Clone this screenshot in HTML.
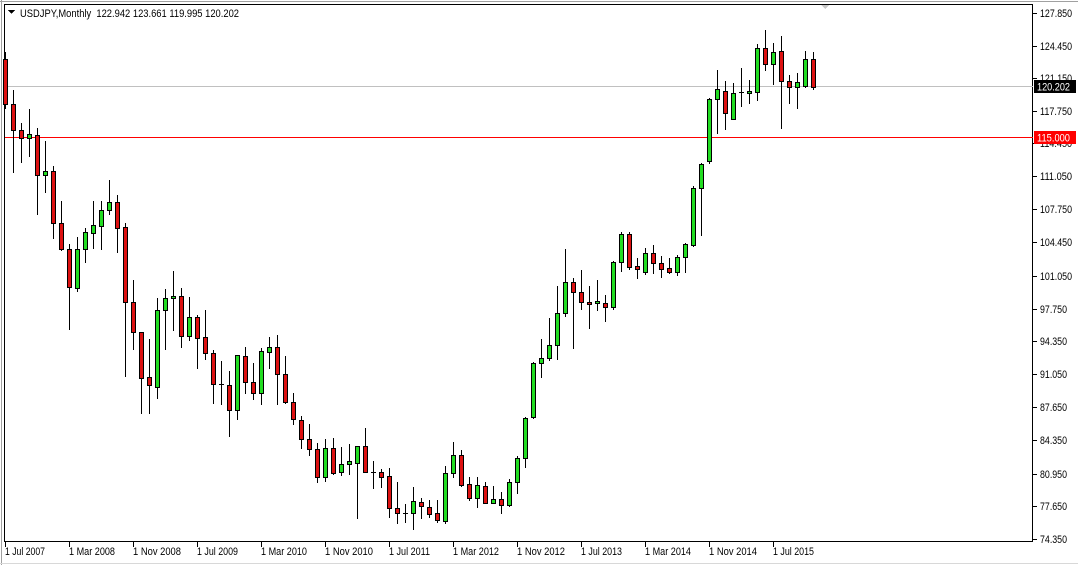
<!DOCTYPE html>
<html><head><meta charset="utf-8">
<style>
html,body{margin:0;padding:0;background:#fff;}
body{width:1078px;height:565px;overflow:hidden;position:relative;}
svg text{font-family:"Liberation Sans",Arial,sans-serif;font-size:11px;fill:#000;}
</style></head><body>
<svg id="s" width="1078" height="565" xmlns="http://www.w3.org/2000/svg" shape-rendering="crispEdges">
<rect x="0" y="0" width="1078" height="565" fill="#fff"/>
<line x1="0" y1="1.5" x2="1078" y2="1.5" stroke="#a0a0a0"/>
<line x1="1.5" y1="0" x2="1.5" y2="565" stroke="#a0a0a0"/>
<line x1="0" y1="563.5" x2="1078" y2="563.5" stroke="#d8d8d8"/>
<rect x="4.5" y="4.5" width="1028" height="537" fill="none" stroke="#000"/>
<polygon points="821,5 829,5 825,9" fill="#c8c8c8"/>
<line x1="5" y1="86.5" x2="1033" y2="86.5" stroke="#c0c0c0"/>
<rect x="5" y="137" width="1028" height="1" style="fill:#ff0000"/>
<g id="c"></g>
<polygon points="8,10 15,10 11.5,14" fill="#000"/>
<text x="20" y="17" textLength="219" lengthAdjust="spacingAndGlyphs" xml:space="preserve">USDJPY,Monthly  122.942 123.661 119.995 120.202</text>
<g id="ax"></g>
<text x="5" y="555" textLength="40" lengthAdjust="spacingAndGlyphs">1 Jul 2007</text>
<text x="69" y="555" textLength="46" lengthAdjust="spacingAndGlyphs">1 Mar 2008</text>
<text x="133" y="555" textLength="48" lengthAdjust="spacingAndGlyphs">1 Nov 2008</text>
<text x="197" y="555" textLength="41" lengthAdjust="spacingAndGlyphs">1 Jul 2009</text>
<text x="261" y="555" textLength="46" lengthAdjust="spacingAndGlyphs">1 Mar 2010</text>
<text x="325" y="555" textLength="48" lengthAdjust="spacingAndGlyphs">1 Nov 2010</text>
<text x="389" y="555" textLength="41" lengthAdjust="spacingAndGlyphs">1 Jul 2011</text>
<text x="453" y="555" textLength="46" lengthAdjust="spacingAndGlyphs">1 Mar 2012</text>
<text x="517" y="555" textLength="48" lengthAdjust="spacingAndGlyphs">1 Nov 2012</text>
<text x="581" y="555" textLength="41" lengthAdjust="spacingAndGlyphs">1 Jul 2013</text>
<text x="645" y="555" textLength="46" lengthAdjust="spacingAndGlyphs">1 Mar 2014</text>
<text x="709" y="555" textLength="48" lengthAdjust="spacingAndGlyphs">1 Nov 2014</text>
<text x="773" y="555" textLength="41" lengthAdjust="spacingAndGlyphs">1 Jul 2015</text>
<text x="1040" y="17" textLength="32" lengthAdjust="spacingAndGlyphs">127.850</text>
<text x="1040" y="50" textLength="32" lengthAdjust="spacingAndGlyphs">124.450</text>
<text x="1040" y="82" textLength="32" lengthAdjust="spacingAndGlyphs">121.150</text>
<text x="1040" y="115" textLength="32" lengthAdjust="spacingAndGlyphs">117.750</text>
<text x="1040" y="147" textLength="32" lengthAdjust="spacingAndGlyphs">114.450</text>
<text x="1040" y="180" textLength="32" lengthAdjust="spacingAndGlyphs">111.050</text>
<text x="1040" y="213" textLength="32" lengthAdjust="spacingAndGlyphs">107.750</text>
<text x="1040" y="246" textLength="32" lengthAdjust="spacingAndGlyphs">104.450</text>
<text x="1040" y="280" textLength="32" lengthAdjust="spacingAndGlyphs">101.050</text>
<text x="1040" y="313" textLength="27" lengthAdjust="spacingAndGlyphs">97.750</text>
<text x="1040" y="345" textLength="27" lengthAdjust="spacingAndGlyphs">94.350</text>
<text x="1040" y="378" textLength="27" lengthAdjust="spacingAndGlyphs">91.050</text>
<text x="1040" y="411" textLength="27" lengthAdjust="spacingAndGlyphs">87.650</text>
<text x="1040" y="444" textLength="27" lengthAdjust="spacingAndGlyphs">84.350</text>
<text x="1040" y="478" textLength="27" lengthAdjust="spacingAndGlyphs">80.950</text>
<text x="1040" y="510" textLength="27" lengthAdjust="spacingAndGlyphs">77.650</text>
<text x="1040" y="543" textLength="27" lengthAdjust="spacingAndGlyphs">74.350</text>
<rect x="1034" y="80" width="42" height="13" fill="#000"/>
<text x="1037" y="90.5" textLength="33" lengthAdjust="spacingAndGlyphs" style="fill:#fff">120.202</text>
<rect x="1034" y="131" width="42" height="13" style="fill:#ff0000"/>
<text x="1037" y="141.5" textLength="33" lengthAdjust="spacingAndGlyphs" style="fill:#fff">115.000</text>
</svg>
<script>
var d=[
[59,104,52,108,'r'],[104,130,90,172,'r'],[130,138,123,162,'r'],[134,138,109,156,'g'],[135,175,128,214,'r'],
[171,175,141,192,'g'],[171,223,166,238,'r'],[223,249,201,250,'r'],[249,287,244,329,'r'],[249,288,237,291,'g'],
[232,249,228,262,'g'],[225,233,201,248,'g'],[210,226,201,249,'g'],[202,210,180,214,'g'],[202,228,195,252,'r'],
[227,302,223,376,'r'],[302,332,280,349,'r'],[332,378,332,413,'r'],[377,385,339,413,'r'],[310,387,298,398,'g'],
[298,310,289,349,'g'],[296,298,271,330,'g'],[296,336,288,347,'r'],[317,336,297,340,'g'],[317,338,315,368,'r'],
[337,353,310,359,'r'],[353,384,350,403,'r'],[384,384,361,404,'d'],[385,410,371,436,'r'],[355,410,355,419,'g'],
[356,382,347,393,'r'],[382,393,363,399,'r'],[351,393,348,404,'g'],[347,352,337,368,'g'],[347,374,335,404,'r'],
[374,402,356,403,'r'],[402,419,393,424,'r'],[420,439,416,448,'r'],[439,449,424,455,'r'],[449,477,443,482,'r'],
[448,477,439,481,'g'],[448,473,438,474,'r'],[464,472,447,475,'g'],[461,464,444,474,'g'],[446,463,446,518,'g'],
[446,472,428,472,'r'],[472,472,461,488,'d'],[472,477,469,487,'r'],[476,508,468,517,'r'],[508,513,482,523,'r'],
[513,513,504,522,'d'],[501,513,487,529,'g'],[502,506,498,518,'r'],[507,514,500,517,'r'],[513,520,500,522,'r'],
[473,521,466,523,'g'],[455,473,442,477,'g'],[455,485,450,486,'r'],[484,498,477,500,'r'],[485,498,477,507,'g'],
[486,503,482,503,'r'],[499,503,486,503,'g'],[499,505,492,513,'r'],[482,505,479,506,'g'],[458,482,456,493,'g'],
[418,458,417,467,'g'],[363,417,362,418,'g'],[358,363,339,377,'g'],[345,358,318,360,'g'],[313,345,286,359,'g'],
[282,313,249,316,'g'],[282,292,278,348,'r'],[292,302,270,309,'r'],[302,304,286,328,'r'],[301,303,280,310,'g'],
[303,307,295,321,'r'],[262,307,261,309,'g'],[234,262,232,271,'g'],[234,267,232,269,'r'],[266,269,258,278,'r'],
[253,272,248,274,'g'],[253,263,245,273,'r'],[263,269,256,277,'r'],[268,272,258,273,'r'],[257,272,255,275,'g'],
[244,257,243,272,'g'],[188,245,186,246,'g'],[164,188,163,235,'g'],[99,161,98,163,'g'],[89,99,70,133,'g'],
[91,113,81,129,'r'],[93,119,83,119,'g'],[92,92,68,106,'d'],[91,93,80,103,'g'],[48,92,44,100,'g'],
[48,64,30,70,'r'],[52,64,43,84,'g'],[51,81,36,128,'r'],[81,87,75,103,'r'],[82,87,73,108,'g'],
[59,86,51,87,'g'],[59,87,52,89,'r']];
var g=document.getElementById('c'),h='';
d.forEach(function(a,i){var cx=5+8*i;
h+='<line x1="'+(cx+0.5)+'" y1="'+a[2]+'" x2="'+(cx+0.5)+'" y2="'+(a[3]+1)+'" stroke="#000"/>';
if(a[4]=='d'){h+='<line x1="'+(cx-2)+'" y1="'+(a[0]+0.5)+'" x2="'+(cx+3)+'" y2="'+(a[0]+0.5)+'" stroke="#000"/>';}
else{var f=a[4]=='g'?'#22dd22':'#dd1111';var t=a[0],b=Math.max(a[1],a[0]+2);
h+='<rect x="'+(cx-2+0.5)+'" y="'+(t+0.5)+'" width="4" height="'+(b-t)+'" fill="'+f+'" stroke="#000"/>';}
});
g.innerHTML=h;
var ax='',ys=[13,46,78,111,143,176,209,242,276,309,341,374,407,440,474,506,539];
ys.forEach(function(y){ax+='<line x1="1033" y1="'+(y+0.5)+'" x2="1037" y2="'+(y+0.5)+'" stroke="#000"/>';});
for(var i=0;i<13;i++){var x=5+64*i;ax+='<line x1="'+(x+0.5)+'" y1="542" x2="'+(x+0.5)+'" y2="547" stroke="#000"/>';}
document.getElementById('ax').innerHTML=ax;
</script>
</body></html>
